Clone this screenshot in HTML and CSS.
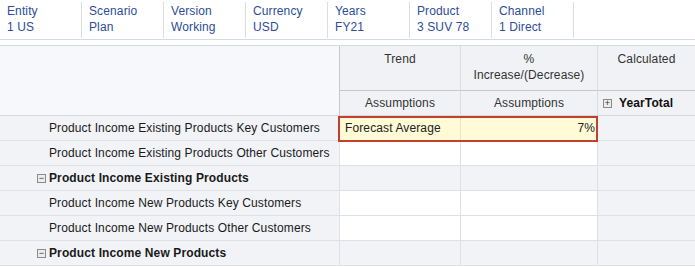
FILE: index.html
```html
<!DOCTYPE html>
<html>
  <head>
    <link rel="stylesheet" href="styles.css">
  </head>
  <body>
    <div class="pov">
      <div class="pov-item"><span>Entity</span><span>1 US</span></div>
      <div class="pov-item"><span>Scenario</span><span>Plan</span></div>
      <div class="pov-item"><span>Version</span><span>Working</span></div>
      <div class="pov-item"><span>Currency</span><span>USD</span></div>
      <div class="pov-item"><span>Years</span><span>FY21</span></div>
      <div class="pov-item"><span>Product</span><span>3 SUV 78</span></div>
      <div class="pov-item"><span>Channel</span><span>1 Direct</span></div>
    </div>

    <div class="grid">
      <div class="corner"></div>
      <div class="col-head">Trend</div>
      <div class="col-head">%<br>Increase/(Decrease)</div>
      <div class="col-head last">Calculated</div>
      <div class="sub-head">Assumptions</div>
      <div class="sub-head">Assumptions</div>
      <div class="sub-head total last"><span class="toggle">+</span>YearTotal</div>

      <div class="label">Product Income Existing Products Key Customers</div>
      <div class="selected">
        <div class="cell">Forecast Average</div>
        <div class="cell num">7%</div>
      </div>
      <div class="calc"></div>

      <div class="label">Product Income Existing Products Other Customers</div>
      <div class="cell"></div>
      <div class="cell"></div>
      <div class="calc"></div>

      <div class="label parent"><span class="toggle">&minus;</span>Product Income Existing Products</div>
      <div class="cell gray"></div>
      <div class="cell gray"></div>
      <div class="calc"></div>

      <div class="label">Product Income New Products Key Customers</div>
      <div class="cell"></div>
      <div class="cell"></div>
      <div class="calc"></div>

      <div class="label">Product Income New Products Other Customers</div>
      <div class="cell"></div>
      <div class="cell"></div>
      <div class="calc"></div>

      <div class="label parent"><span class="toggle">&minus;</span>Product Income New Products</div>
      <div class="cell gray"></div>
      <div class="cell gray"></div>
      <div class="calc"></div>
    </div>
  </body>
</html>
```

FILE: styles.css
```css
body {
  margin: 0;
  font-family: "Liberation Sans", Arial, sans-serif;
  font-size: 12px;
  letter-spacing: 0.12px;
  color: #222;
  background-color: #fff;
}

.pov {
  display: flex;
  height: 40px;
  border-bottom: 1px solid #d5dae0;
  box-sizing: border-box;
}

.pov-item {
  display: flex;
  flex-direction: column;
  width: 82px;
  height: 36px;
  margin-top: 2px;
  padding: 1px 0 0 7px;
  box-sizing: border-box;
  border-right: 1px solid #dadee3;
  line-height: 16px;
  color: #2d4c9a;
}

.grid {
  display: grid;
  grid-template-columns: 340px 121px 137px 97px;
  grid-template-rows: 45px 25px;
  grid-auto-rows: 25px;
  margin-top: 5px;
  border-top: 1px solid #d5dae0;
}

.corner {
  grid-row: 1 / 3;
  background-color: #f7f8fb;
  border-right: 1px solid #c6c9cc;
  border-bottom: 1px solid #d5d8dc;
}

.col-head {
  padding-top: 5px;
  box-sizing: border-box;
  text-align: center;
  line-height: 16px;
  color: #333;
  background-color: #f0f2f5;
  border-right: 1px solid #d9dde2;
  border-bottom: 1px solid #c6c9cc;
}

.sub-head {
  padding-top: 1px;
  box-sizing: border-box;
  text-align: center;
  line-height: 23px;
  color: #333;
  background-color: #f0f2f5;
  border-right: 1px solid #d9dde2;
  border-bottom: 1px solid #d5d8dc;
}

.last {
  border-right: none;
}

.sub-head.total {
  text-align: left;
  padding-left: 5px;
  font-weight: bold;
  color: #111;
}

.toggle {
  display: inline-block;
  width: 7px;
  height: 7px;
  margin-right: 7px;
  border: 1px solid #8a8a8a;
  background-color: #ececec;
  font-size: 9px;
  line-height: 7px;
  text-align: center;
  color: #333;
  font-weight: normal;
  vertical-align: 1px;
}

.label {
  padding-left: 49px;
  line-height: 24px;
  white-space: nowrap;
  background-color: #f1f3f6;
  border-right: 1px solid #dde1e6;
  border-bottom: 1px solid #dde1e6;
  color: #1a1a1a;
}

.label.parent {
  padding-left: 37px;
  font-weight: bold;
}

.label.parent .toggle {
  margin-right: 3px;
}

.cell {
  padding: 0 6px;
  line-height: 24px;
  background-color: #fff;
  border-right: 1px solid #dde1e6;
  border-bottom: 1px solid #dde1e6;
}

.cell.gray {
  background-color: #f1f3f6;
}

.cell.num {
  text-align: right;
}

.calc {
  background-color: #f1f3f6;
  border-bottom: 1px solid #dde1e6;
}

.selected {
  grid-column: 2 / 4;
  display: grid;
  grid-template-columns: 121px 137px;
  margin-left: -2px;
  border: 2px solid #c4402d;
  background-color: #fffbd6;
  position: relative;
  z-index: 1;
  height: 26px;
  box-sizing: border-box;
}

.selected .cell {
  background-color: transparent;
  line-height: 21px;
  border-bottom: none;
  border-right-color: #e8e4c4;
}

.selected .cell:first-child {
  padding-left: 5px;
}

.selected .cell.num {
  border-right: none;
  padding-right: 3px;
}
```
